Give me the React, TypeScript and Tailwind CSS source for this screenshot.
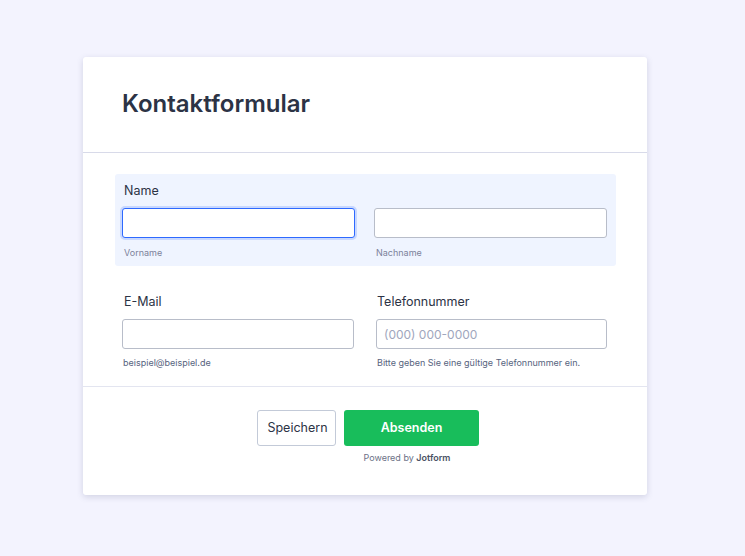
export default function App() {
  return (
    <div className="min-h-[556px] bg-[#f3f3fe] pt-[57px] pb-[62px] font-['Inter',sans-serif] text-[#2c3345]">
      <div className="ml-[83px] w-[564px] rounded-[3px] bg-white shadow-[0_2px_6px_rgba(60,64,110,0.18)]">
        {/* Header */}
        <div className="h-[96px] border-b border-[#d8dae9] pl-[39px] pt-[31px]">
          <h1 className="text-[24px] font-semibold leading-[32px] text-[#2c3345]">Kontaktformular</h1>
        </div>

        {/* Fields */}
        <div className="pl-[32px] pr-[31px] pt-[21px]">
          <div className="h-[92px] rounded-[3px] bg-[#eff4ff] pl-[7px] pr-[9px] pt-[9px]">
            <label className="block pl-[2px] text-[12.5px] leading-[16px] text-[#2c3345]">Name</label>
            <div className="mt-[9px] grid grid-cols-[233px_233px] gap-x-[19px]">
              <div>
                <input className="block h-[30px] w-full rounded-[3px] border border-[#2e69ff] bg-white px-2 text-[14px] shadow-[0_0_0_2px_rgba(46,105,255,0.2)] outline-none" />
                <p className="mt-[9px] pl-[2px] text-[9px] leading-[12px] text-[#7d829b]">Vorname</p>
              </div>
              <div>
                <input className="block h-[30px] w-full rounded-[3px] border border-[#b8bdc9] bg-white px-2 text-[14px] outline-none" />
                <p className="mt-[9px] pl-[2px] text-[9px] leading-[12px] text-[#7d829b]">Nachname</p>
              </div>
            </div>
          </div>

          <div className="grid grid-cols-[232px_231px] gap-x-[22px] pl-[7px] pt-[28px] pb-[17px]">
            <div>
              <label className="block pl-[2px] text-[12.5px] leading-[16px]">E-Mail</label>
              <input className="mt-[9px] block h-[30px] w-full rounded-[3px] border border-[#b8bdc9] bg-white px-2 text-[14px] outline-none" />
              <p className="mt-[8px] pl-[1px] text-[9px] leading-[12px] text-[#57647e]">beispiel@beispiel.de</p>
            </div>
            <div>
              <label className="block pl-[1px] text-[12.5px] leading-[16px]">Telefonnummer</label>
              <input
                placeholder="(000) 000-0000"
                className="mt-[9px] block h-[30px] w-full rounded-[3px] border border-[#b8bdc9] bg-white px-[7px] text-[12px] outline-none placeholder:text-[#a0a6bd]"
              />
              <p className="mt-[8px] pl-[1px] text-[9px] leading-[12px] text-[#57647e]">
                Bitte geben Sie eine gültige Telefonnummer ein.
              </p>
            </div>
          </div>
        </div>

        {/* Footer */}
        <div className="border-t border-[#e3e5f0] pt-[23px] pb-[31px]">
          <div className="flex justify-center gap-[8px] pl-[6px]">
            <button className="h-[36px] w-[79px] rounded-[3px] border border-[#c3cad8] bg-white pl-[2px] text-[12.5px] text-[#2c3345]">
              Speichern
            </button>
            <button className="h-[36px] w-[135px] rounded-[3px] bg-[#18bd5b] text-[12.5px] font-semibold text-white">
              Absenden
            </button>
          </div>
          <p className="mt-[6px] pl-[84px] text-center text-[9px] leading-[12px] text-[#6c7186]">
            Powered by <span className="font-semibold text-[#4b5265]">Jotform</span>
          </p>
        </div>
      </div>
    </div>
  )
}
